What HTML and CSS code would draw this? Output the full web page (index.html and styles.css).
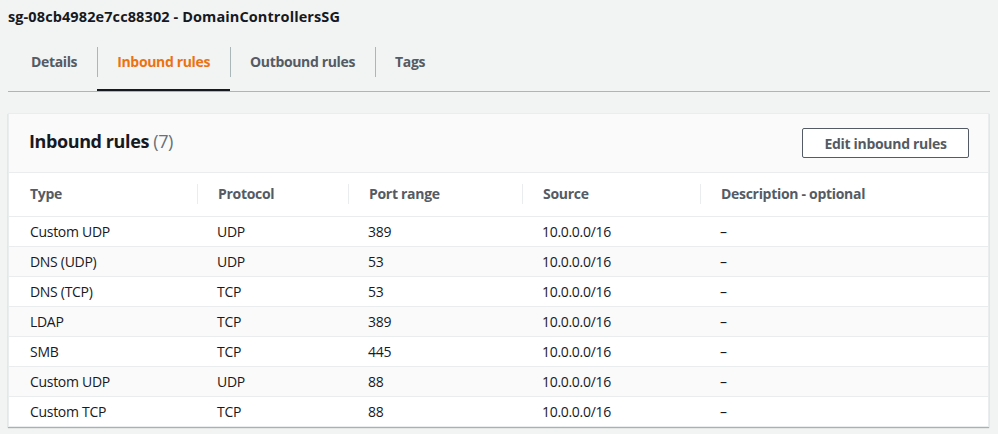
FILE: index.html
```html
<!DOCTYPE html>
<html>
<head>
<meta charset="utf-8">
<link rel="stylesheet" href="styles.css">
</head>
<body>
<div class="page">
  <h1 class="title">sg-08cb4982e7cc88302 - DomainControllersSG</h1>
  <div class="tabs">
    <div class="tab">Details</div>
    <div class="tab active">Inbound rules</div>
    <div class="tab">Outbound rules</div>
    <div class="tab">Tags</div>
  </div>
  <div class="panel">
    <div class="panel-header">
      <h2 class="panel-title">Inbound rules <span class="count">(7)</span></h2>
      <button class="btn">Edit inbound rules</button>
    </div>
    <table class="rules">
      <colgroup>
        <col class="c1"><col class="c2"><col class="c3"><col class="c4"><col class="c5">
      </colgroup>
      <thead>
        <tr>
          <th><span>Type</span></th>
          <th><span>Protocol</span></th>
          <th><span>Port range</span></th>
          <th><span>Source</span></th>
          <th><span>Description - optional</span></th>
        </tr>
      </thead>
      <tbody>
        <tr><td>Custom UDP</td><td>UDP</td><td>389</td><td>10.0.0.0/16</td><td>–</td></tr>
        <tr><td>DNS (UDP)</td><td>UDP</td><td>53</td><td>10.0.0.0/16</td><td>–</td></tr>
        <tr><td>DNS (TCP)</td><td>TCP</td><td>53</td><td>10.0.0.0/16</td><td>–</td></tr>
        <tr><td>LDAP</td><td>TCP</td><td>389</td><td>10.0.0.0/16</td><td>–</td></tr>
        <tr><td>SMB</td><td>TCP</td><td>445</td><td>10.0.0.0/16</td><td>–</td></tr>
        <tr><td>Custom UDP</td><td>UDP</td><td>88</td><td>10.0.0.0/16</td><td>–</td></tr>
        <tr><td>Custom TCP</td><td>TCP</td><td>88</td><td>10.0.0.0/16</td><td>–</td></tr>
      </tbody>
    </table>
  </div>
</div>
</body>
</html>
```
FILE: styles.css
```css
* { box-sizing: border-box; }
html, body { margin: 0; padding: 0; }
body {
  background: #f2f3f3;
  font-family: "Open Sans", "Noto Sans", sans-serif;
  color: #16191f;
  width: 998px;
  height: 434px;
  overflow: hidden;
}
.page {
  padding: 0 8px 0 8px;
}
.title {
  margin: 0;
  font-size: 14.5px;
  font-weight: 700;
  line-height: 20px;
  padding-top: 7px;
  height: 33px;
  letter-spacing: 0.1px;
}
.tabs {
  display: flex;
  height: 59px;
  border-bottom: 1px solid #aab7b8;
  padding-left: 3px;
}
.tab {
  position: relative;
  display: flex;
  align-items: center;
  padding: 0 20px 0 20px;
  font-size: 14px;
  font-weight: 700;
  color: #545b64;
  border-bottom: 2px solid transparent;
  letter-spacing: -0.35px;
}
.tab + .tab::before {
  content: "";
  position: absolute;
  left: 0;
  top: 14px;
  height: 30px;
  border-left: 1px solid #aab7b8;
}
.tab.active {
  color: #ec7211;
  border-bottom-color: #16191f;
}
.panel {
  margin-top: 21px;
  width: 981px;
  background: #fff;
  border: 1px solid #eaeded;
  box-shadow: 0 1px 1px 0 rgba(0, 28, 36, 0.3);
}
.panel-header {
  display: flex;
  align-items: center;
  justify-content: space-between;
  height: 59px;
  padding: 0 19px 0 20px;
  background: #fafafa;
  border-bottom: 1px solid #eaeded;
}
.panel-title {
  margin: 0;
  font-size: 18px;
  font-weight: 700;
  line-height: 24px;
  letter-spacing: -0.4px;
  margin-top: -4px;
}
.count {
  color: #687078;
  font-weight: 400;
}
.btn {
  width: 167px;
  height: 30px;
  background: #fff;
  border: 1px solid #545b64;
  border-radius: 2px;
  color: #545b64;
  font-family: inherit;
  font-size: 14px;
  font-weight: 700;
  letter-spacing: -0.3px;
  padding: 0;
}
.rules {
  width: 100%;
  border-collapse: collapse;
  table-layout: fixed;
}
.c1 { width: 188px; }
.c2 { width: 151px; }
.c3 { width: 174px; }
.c4 { width: 178px; }
th {
  height: 43px;
  text-align: left;
  font-size: 14px;
  font-weight: 700;
  color: #545b64;
  padding: 0;
  border-bottom: 1px solid #eaeded;
  letter-spacing: -0.3px;
}
th span {
  display: block;
  padding: 0 0 0 20px;
  line-height: 20px;
  border-left: 1px solid #eaeded;
}
th:first-child span {
  border-left: none;
  padding-left: 21px;
}
td {
  height: 30px;
  font-size: 14px;
  padding: 0 0 0 20px;
  border-bottom: 1px solid #eaeded;
  letter-spacing: -0.3px;
}
td:first-child { padding-left: 21px; }
tbody tr:nth-child(even) { background: #fafafa; }
tbody tr:last-child td { border-bottom: none; }
```
